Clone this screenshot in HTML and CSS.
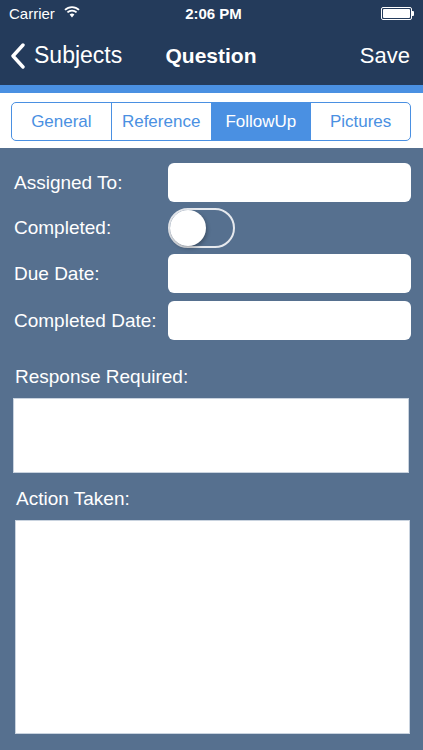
FILE: index.html
```html
<html><head>
<meta charset="UTF-8">
<meta name="viewport" content="width=device-width, initial-scale=1.0">
<title>Question</title>
<link rel="stylesheet" href="styles.css">
</head>
<body>
  <header class="top">
    <div class="status">
      <div class="status-left">
        <span>Carrier</span>
        <svg class="wifi" width="16" height="12" viewBox="0 0 16 12">
          <path d="M8 11.5 L5.6 8.6 A3.6 3.6 0 0 1 10.4 8.6 Z" fill="#fff"/>
          <path d="M3.4 6.4 A6.6 6.6 0 0 1 12.6 6.4" stroke="#fff" stroke-width="1.8" fill="none"/>
          <path d="M1 3.9 A10 10 0 0 1 15 3.9" stroke="#fff" stroke-width="1.8" fill="none"/>
        </svg>
      </div>
      <div class="time">2:06 PM</div>
      <div class="status-right">
        <span class="battery"><span class="battery-fill"></span></span><span class="battery-nub"></span>
      </div>
    </div>
    <nav class="navbar">
      <a class="back" href="#">
        <svg width="16" height="26" viewBox="0 0 16 26">
          <polyline points="13,2 3,13 13,24" stroke="#fff" stroke-width="3.4" fill="none" stroke-linecap="round" stroke-linejoin="round"/>
        </svg>
        <span>Subjects</span>
      </a>
      <div class="title">Question</div>
      <a class="save" href="#">Save</a>
    </nav>
  </header>
  <div class="strip"></div>

  <div class="tabs-bar">
    <div class="segmented">
      <a href="#">General</a>
      <a href="#">Reference</a>
      <a href="#" class="active">FollowUp</a>
      <a href="#">Pictures</a>
    </div>
  </div>

  <main class="form">
    <div class="row">
      <label>Assigned To:</label>
      <div class="field"></div>
    </div>
    <div class="row">
      <label>Completed:</label>
      <div class="switch"><span class="knob"></span></div>
    </div>
    <div class="row">
      <label>Due Date:</label>
      <div class="field"></div>
    </div>
    <div class="row last">
      <label>Completed Date:</label>
      <div class="field"></div>
    </div>

    <div class="block-label response-label">Response Required:</div>
    <div class="area response"></div>

    <div class="block-label action-label">Action Taken:</div>
    <div class="area action"></div>
  </main>
</body></html>
```

FILE: styles.css
```css
body {
  margin: 0;
  font-family: "Liberation Sans", Arial, sans-serif;
  background-color: #56708f;
  color: #fff;
  width: 423px;
  height: 750px;
  overflow: hidden;
}
a {
  text-decoration: none;
}
.top {
  background-color: #243b5b;
}
.status {
  height: 26px;
  display: flex;
  align-items: center;
  justify-content: space-between;
  padding: 0 9px;
  font-size: 15px;
}
.status-left {
  display: flex;
  align-items: center;
  gap: 9px;
  width: 120px;
}
.wifi {
  margin-top: -3px;
}
.time {
  font-weight: bold;
  font-size: 15px;
  margin-left: 4px;
}
.status-right {
  width: 120px;
  display: flex;
  justify-content: flex-end;
  align-items: center;
}
.battery {
  width: 27px;
  height: 9px;
  border: 1px solid #fff;
  border-radius: 2px;
  padding: 1px;
  display: inline-block;
}
.battery-fill {
  display: block;
  width: 100%;
  height: 100%;
  background-color: #fff;
  border-radius: 1px;
}
.battery-nub {
  width: 2px;
  height: 5px;
  background-color: #fff;
  border-radius: 0 1px 1px 0;
}
.navbar {
  height: 59px;
  display: flex;
  align-items: center;
  justify-content: space-between;
  padding: 0 13px 0 10px;
}
.back {
  display: flex;
  align-items: center;
  gap: 8px;
  color: #fff;
  font-size: 23px;
  width: 140px;
}
.title {
  font-weight: bold;
  font-size: 21px;
  margin-left: 2px;
}
.save {
  color: #fff;
  font-size: 22px;
  width: 140px;
  text-align: right;
}
.strip {
  height: 8px;
  background-color: #4a90e2;
}
.tabs-bar {
  background-color: #fff;
  padding: 9px 12px 7px 11px;
}
.segmented {
  display: flex;
  height: 37px;
  border: 1px solid #4a90e2;
  border-radius: 5px;
  overflow: hidden;
}
.segmented a {
  flex: 1;
  display: flex;
  align-items: center;
  justify-content: center;
  color: #4a90e2;
  font-size: 17px;
  border-left: 1px solid #4a90e2;
}
.segmented a:first-child {
  border-left: none;
}
.segmented a.active {
  background-color: #4a90e2;
  color: #fff;
}
.form {
  padding: 15px 12px 0 14px;
  display: flex;
  flex-direction: column;
}
.row {
  display: flex;
  align-items: center;
  margin-bottom: 6px;
}
.row.last {
  margin-top: 2px;
}
.row label {
  width: 154px;
  font-size: 19px;
}
.field {
  flex: 1;
  height: 39px;
  background-color: #fff;
  border-radius: 6px;
}
.switch {
  width: 63px;
  height: 36px;
  border: 2px solid #e6e9ee;
  border-radius: 20px;
  position: relative;
}
.knob {
  position: absolute;
  left: 0;
  top: 0;
  width: 36px;
  height: 36px;
  border-radius: 50%;
  background-color: #fff;
  box-shadow: 1px 2px 4px rgba(0, 0, 0, 0.3);
}
.block-label {
  font-size: 19px;
  line-height: 22px;
}
.response-label {
  margin: 20px 0 0 1px;
}
.area {
  background-color: #fff;
  border: 1px solid #c9d3df;
}
.response {
  margin: 10px 2px 0 -1px;
  height: 73px;
}
.action-label {
  margin: 15px 0 0 2px;
}
.action {
  margin: 10px 1px 0 1px;
  height: 212px;
}
```
